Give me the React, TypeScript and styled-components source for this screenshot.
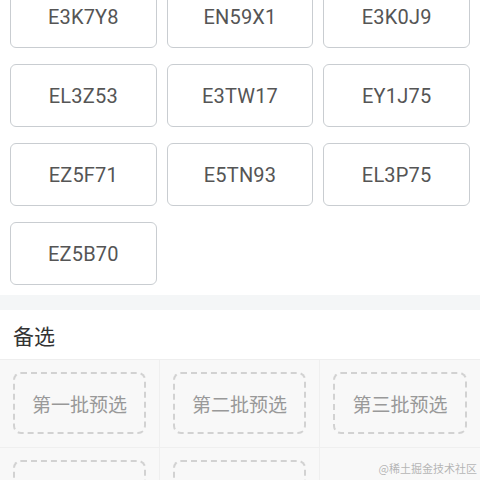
import React from 'react';
import styled, { createGlobalStyle } from 'styled-components';

const CODES = [
  'E3K7Y8', 'EN59X1', 'E3K0J9',
  'EL3Z53', 'E3TW17', 'EY1J75',
  'EZ5F71', 'E5TN93', 'EL3P75',
  'EZ5B70',
];

const BATCHES = ['第一批预选', '第二批预选', '第三批预选', '第四批预选', '第五批预选'];

const GlobalStyle = createGlobalStyle`
  html, body {
    margin: 0;
    padding: 0;
    background: #ffffff;
    overflow: hidden;
  }
  body {
    font-family: Roboto, "Noto Sans", "Noto Sans CJK SC", sans-serif;
  }
`;

const App: React.FC = () => (
  <>
    <GlobalStyle />
    <Page>
      <CodeGrid>
        {CODES.map((code) => (
          <CodeCard key={code}>{code}</CodeCard>
        ))}
      </CodeGrid>
      <Divider />
      <Section>
        <SectionTitle>备选</SectionTitle>
        <BatchGrid>
          {BATCHES.map((name) => (
            <BatchCell key={name}>
              <BatchBox>{name}</BatchBox>
            </BatchCell>
          ))}
          <BatchCell />
        </BatchGrid>
      </Section>
      <Watermark>@稀土掘金技术社区</Watermark>
    </Page>
  </>
);

const Page = styled.div`
  position: relative;
  width: 480px;
  height: 480px;
  overflow: hidden;
  background: #fff;
`;

const CodeGrid = styled.div`
  display: grid;
  grid-template-columns: repeat(3, 1fr);
  column-gap: 10px;
  row-gap: 16px;
  padding: 0 10px 10px;
  margin-top: -15px;
`;

const CodeCard = styled.div`
  height: 61px;
  border: 1px solid #c9cdd1;
  border-radius: 6px;
  display: flex;
  align-items: center;
  justify-content: center;
  font-size: 20px;
  color: #555;
  letter-spacing: 0.2px;
`;

const Divider = styled.div`
  height: 15px;
  background: #f4f6f7;
`;

const Section = styled.div`
  background: #fff;
`;

const SectionTitle = styled.div`
  height: 49px;
  display: flex;
  align-items: center;
  padding-left: 13px;
  font-family: "Noto Sans CJK SC", sans-serif;
  font-size: 21px;
  color: #333;
`;

const BatchGrid = styled.div`
  display: grid;
  grid-template-columns: repeat(3, 1fr);
  border-top: 1px solid #eeeeee;
  background: #f8f8f8;
`;

const BatchCell = styled.div`
  height: 88px;
  box-sizing: border-box;
  padding: 12px 13px 13px;
  border-right: 1px solid #efefef;
  border-bottom: 1px solid #efefef;

  &:nth-child(3n) {
    border-right: none;
  }
`;

const BatchBox = styled.div`
  height: 100%;
  box-sizing: border-box;
  border: 2px dashed #d2d2d2;
  border-radius: 8px;
  display: flex;
  align-items: center;
  justify-content: center;
  font-family: "Noto Sans CJK SC", sans-serif;
  font-size: 19px;
  color: #999;
`;

const Watermark = styled.div`
  position: absolute;
  right: 3px;
  bottom: 4px;
  font-family: "Noto Sans CJK SC", serif;
  font-size: 11px;
  color: rgba(150, 150, 150, 0.7);
`;

export default App;
